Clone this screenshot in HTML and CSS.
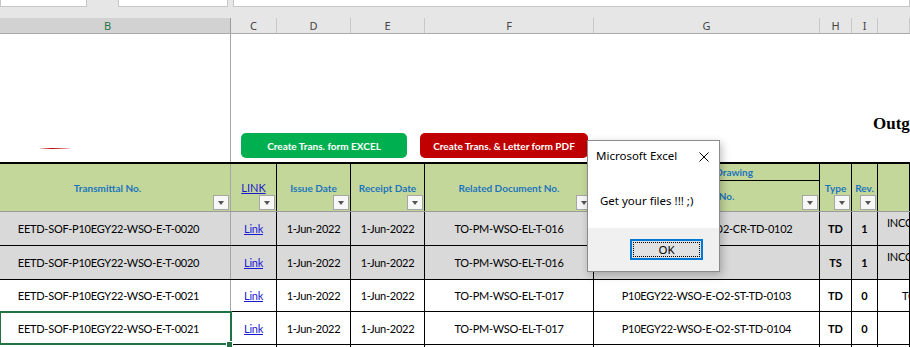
FILE: index.html
```html
<!DOCTYPE html>
<html lang="en">

<head>
  <meta charset="UTF-8" />
  <title>Outgoing Transmittal</title>
  <link rel="stylesheet" href="styles.css">
</head>

<body>
  <div class="topbar">
    <div class="namebox"></div>
    <div class="fxbox"></div>
    <div class="formula"></div>
  </div>

  <div class="cols colhead">
    <div class="sel">B</div>
    <div>C</div>
    <div>D</div>
    <div>E</div>
    <div>F</div>
    <div>G</div>
    <div>H</div>
    <div>I</div>
    <div></div>
  </div>

  <div class="cols banner">
    <div class="bcol"><span class="redline"></span></div>
    <div class="actions">
      <div class="btn btn-excel">Create Trans. form EXCEL</div>
      <div class="btn btn-pdf">Create Trans. &amp; Letter form PDF</div>
    </div>
    <div class="gap"></div>
    <div class="title">Outgoing Transmittal</div>
  </div>

  <div class="cols thead">
    <div class="th bcol">Transmittal No.<span class="filter"></span></div>
    <div class="th"><u class="link">LINK</u><span class="filter"></span></div>
    <div class="th">Issue Date<span class="filter"></span></div>
    <div class="th">Receipt Date<span class="filter"></span></div>
    <div class="th">Related Document No.<span class="filter"></span></div>
    <div class="th split">
      <div class="split-top">Transmitted Drawing</div>
      <div class="split-bot">Drawing No.<span class="filter"></span></div>
    </div>
    <div class="th">Type<span class="filter"></span></div>
    <div class="th">Rev.<span class="filter"></span></div>
    <div class="th"></div>
  </div>

  <div class="cols row shade">
    <div class="bcol">EETD-SOF-P10EGY22-WSO-E-T-0020</div>
    <div><u class="link">Link</u></div>
    <div>1-Jun-2022</div>
    <div>1-Jun-2022</div>
    <div>TO-PM-WSO-EL-T-016</div>
    <div>P10EGY22-WSO-E-O2-CR-TD-0102</div>
    <div class="b">TD</div>
    <div class="b">1</div>
    <div class="note">INCOMING</div>
  </div>

  <div class="cols row shade">
    <div class="bcol">EETD-SOF-P10EGY22-WSO-E-T-0020</div>
    <div><u class="link">Link</u></div>
    <div>1-Jun-2022</div>
    <div>1-Jun-2022</div>
    <div>TO-PM-WSO-EL-T-016</div>
    <div></div>
    <div class="b">TS</div>
    <div class="b">1</div>
    <div class="note">INCOMING</div>
  </div>

  <div class="cols row short">
    <div class="bcol">EETD-SOF-P10EGY22-WSO-E-T-0021</div>
    <div><u class="link">Link</u></div>
    <div>1-Jun-2022</div>
    <div>1-Jun-2022</div>
    <div>TO-PM-WSO-EL-T-017</div>
    <div>P10EGY22-WSO-E-O2-ST-TD-0103</div>
    <div class="b">TD</div>
    <div class="b">0</div>
    <div class="note mid">TO</div>
  </div>

  <div class="cols row mid-row">
    <div class="bcol active">EETD-SOF-P10EGY22-WSO-E-T-0021</div>
    <div><u class="link">Link</u></div>
    <div>1-Jun-2022</div>
    <div>1-Jun-2022</div>
    <div>TO-PM-WSO-EL-T-017</div>
    <div>P10EGY22-WSO-E-O2-ST-TD-0104</div>
    <div class="b">TD</div>
    <div class="b">0</div>
    <div></div>
  </div>

  <div class="cols row">
    <div class="bcol"></div>
    <div></div>
    <div></div>
    <div></div>
    <div></div>
    <div></div>
    <div></div>
    <div></div>
    <div></div>
  </div>

  <div class="dialog">
    <div class="dlg-title">
      Microsoft Excel
      <svg class="dlg-close" width="10" height="10" viewBox="0 0 10 10">
        <path d="M0.5 0.5 L9.5 9.5 M9.5 0.5 L0.5 9.5" stroke="#000" stroke-width="1" fill="none" />
      </svg>
    </div>
    <div class="dlg-body">Get your files !!! ;)</div>
    <div class="dlg-foot">
      <div class="ok">OK</div>
    </div>
  </div>
</body>

</html>
```

FILE: styles.css
```css
* {
  box-sizing: border-box;
}

body {
  margin: 0;
  width: 910px;
  height: 347px;
  overflow: hidden;
  background-color: #fff;
  font-family: Lato, 'Liberation Sans', sans-serif;
  color: #000;
  position: relative;
}

/* excel chrome */
.topbar {
  height: 18px;
  background-color: #e6e6e6;
  display: flex;
  align-items: flex-start;
}

.topbar div {
  height: 7px;
  background-color: #fff;
  border: 1px solid #c6c6c6;
  border-top: none;
}

.namebox {
  width: 87px;
}

.fxbox {
  width: 110px;
  margin-left: 31px;
}

.formula {
  flex: 1;
  margin-left: 5px;
}

.cols {
  display: grid;
  grid-template-columns: 231px 46px 74px 74px 169px 226px 32px 26px 32px;
}

.colhead {
  height: 16px;
  background-color: #e6e6e6;
  border-bottom: 1px solid #ababab;
  font-family: 'Noto Sans', sans-serif;
  font-size: 11px;
  color: #444;
}

.colhead div {
  border-right: 1px solid #c8c8c8;
  text-align: center;
  line-height: 15px;
}

.colhead .sel {
  background-color: #d2d2d2;
  color: #217346;
  padding-right: 15px;
  border-right-color: #9a9a9a;
}

/* top area with buttons */
.banner {
  height: 130px;
  border-bottom: 2px solid #000;
}

.bcol {
  border-right: 1px solid #a6a6a6 !important;
}

.banner .bcol {
  display: flex;
  align-items: flex-end;
}

.redline {
  width: 30px;
  height: 1px;
  margin: 0 0 13px 40px;
  background: linear-gradient(90deg, rgba(192, 0, 0, 0.2), #c00000 40%, rgba(192, 0, 0, 0.2));
}

.actions {
  grid-column: 2 / 6;
  display: flex;
  align-items: flex-end;
  gap: 13px;
  padding: 0 0 4px 10px;
}

.btn {
  height: 25px;
  border-radius: 5px;
  color: #fff;
  font-weight: bold;
  font-size: 10px;
  display: flex;
  align-items: center;
  justify-content: center;
  flex-shrink: 0;
}

.btn-excel {
  width: 166px;
  background-color: #00b050;
}

.btn-pdf {
  width: 168px;
  background-color: #c00000;
}

.gap {
  grid-column: 6 / 8;
}

.title {
  grid-column: 8 / 10;
  padding: 80px 0 0 21px;
  font-family: 'Liberation Serif', serif;
  font-weight: bold;
  font-size: 17px;
  white-space: nowrap;
  overflow: hidden;
}

/* table header */
.thead {
  height: 48px;
  border-bottom: 1px solid #9a9a9a;
}

.th {
  position: relative;
  background-color: #c4d79b;
  border-right: 1px solid #000;
  display: flex;
  align-items: center;
  justify-content: center;
  font-weight: bold;
  font-size: 10px;
  color: #1b75bc;
  white-space: nowrap;
}

.th.bcol {
  padding-right: 15px;
}

.split {
  flex-direction: column;
  align-items: stretch;
}

.split-top {
  height: 17px;
  border-bottom: 1px solid #000;
  text-align: center;
  line-height: 16px;
}

.split-bot {
  position: relative;
  flex: 1;
  display: flex;
  align-items: center;
  justify-content: center;
}

.filter {
  position: absolute;
  right: 1px;
  bottom: 1px;
  width: 16px;
  height: 15px;
  background-color: #f7f7f7;
  border: 1px solid #a6a6a6;
}

.filter::after {
  content: '';
  position: absolute;
  left: 4px;
  top: 5px;
  border-left: 3.5px solid transparent;
  border-right: 3.5px solid transparent;
  border-top: 4px solid #555;
}

.link {
  color: #1a1ad0;
  font-weight: normal;
}

.th .link {
  font-size: 11px;
}

/* data rows */
.row {
  height: 34px;
  border-bottom: 1px solid #000;
  font-size: 11px;
  letter-spacing: -0.25px;
}

.row.short {
  height: 32px;
}

.row.mid-row {
  height: 33px;
}

.row div {
  border-right: 1px solid #000;
  display: flex;
  align-items: center;
  justify-content: center;
  white-space: nowrap;
  overflow: hidden;
}

.row .bcol {
  padding-right: 13px;
}

.shade {
  background-color: #d9d9d9;
}

.row .b {
  font-weight: bold;
  letter-spacing: 0;
}

.row .note {
  justify-content: flex-start;
  align-items: flex-start;
  padding: 4px 0 0 9px;
}

.row .note.mid {
  align-items: center;
  padding: 0 0 0 24px;
}

.row .active {
  overflow: visible;
  position: relative;
  outline: 2px solid #217346;
  outline-offset: -1px;
}

.row .active::after {
  content: '';
  position: absolute;
  right: -3px;
  bottom: -4px;
  width: 5px;
  height: 5px;
  background-color: #217346;
  border: 1px solid #fff;
}

/* message box */
.dialog {
  position: absolute;
  left: 587px;
  top: 140px;
  width: 133px;
  height: 132px;
  background-color: #fff;
  border: 1px solid #8c8c8c;
  box-shadow: 2px 3px 8px rgba(0, 0, 0, 0.25);
  font-family: 'Noto Sans', sans-serif;
  font-size: 11.5px;
  display: flex;
  flex-direction: column;
}

.dlg-title {
  height: 30px;
  padding: 7px 0 0 8px;
  display: flex;
  justify-content: space-between;
}

.dlg-close {
  margin: 4px 10px 0 0;
}

.dlg-body {
  flex: 1;
  padding: 22px 0 0 12px;
}

.dlg-foot {
  height: 43px;
  background-color: #f0f0f0;
  display: flex;
  justify-content: flex-end;
  padding: 11px 16px 0 0;
}

.ok {
  width: 73px;
  height: 21px;
  border: 2px solid #0078d7;
  background-color: #e1e1e1;
  outline: 1px dotted #000;
  outline-offset: -4px;
  text-align: center;
  line-height: 17px;
}
```
